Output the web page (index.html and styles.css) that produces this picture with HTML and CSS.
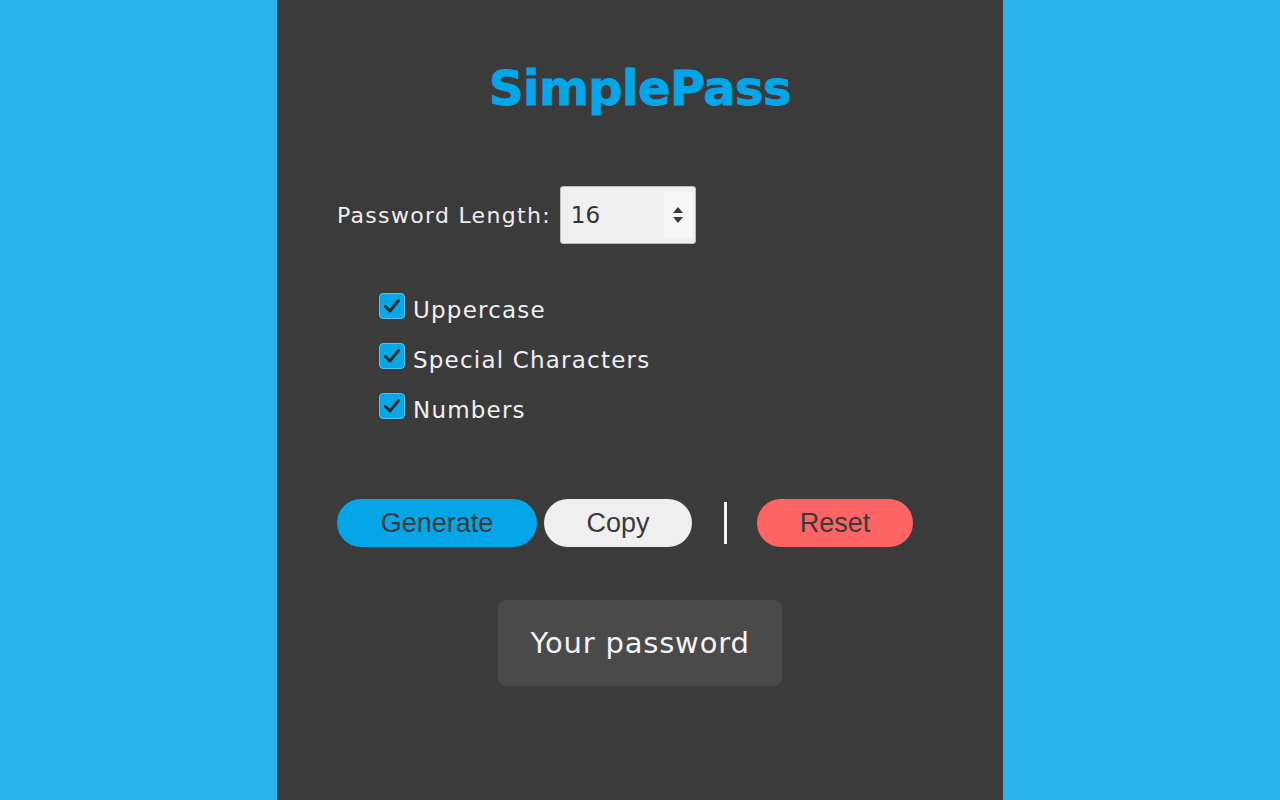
FILE: index.html
```html
<!DOCTYPE html>
<html>
<head>
<meta charset="utf-8">
<link rel="stylesheet" href="styles.css">
</head>
<body>
<main class="panel">
  <h1 class="title">SimplePass</h1>
  <div class="length-row">
    <span class="length-label">Password Length:</span>
    <div class="num-input">
      <span class="num-value">16</span>
      <span class="spinner">
        <svg width="12" height="28" viewBox="0 0 12 28"><path d="M6 6 L11 12 L1 12 Z" fill="#3a3a3a"/><path d="M1 16 L11 16 L6 22 Z" fill="#3a3a3a"/></svg>
      </span>
    </div>
  </div>
  <ul class="options">
    <li class="option"><span class="check"><svg width="22" height="22" viewBox="0 0 22 22"><path d="M4.5 11.5 L9 16 L17.5 5.5" fill="none" stroke="#2e2e2e" stroke-width="3" stroke-linecap="round" stroke-linejoin="round"/></svg></span><span class="opt-label">Uppercase</span></li>
    <li class="option"><span class="check"><svg width="22" height="22" viewBox="0 0 22 22"><path d="M4.5 11.5 L9 16 L17.5 5.5" fill="none" stroke="#2e2e2e" stroke-width="3" stroke-linecap="round" stroke-linejoin="round"/></svg></span><span class="opt-label">Special Characters</span></li>
    <li class="option"><span class="check"><svg width="22" height="22" viewBox="0 0 22 22"><path d="M4.5 11.5 L9 16 L17.5 5.5" fill="none" stroke="#2e2e2e" stroke-width="3" stroke-linecap="round" stroke-linejoin="round"/></svg></span><span class="opt-label">Numbers</span></li>
  </ul>
  <div class="buttons">
    <button class="btn btn-generate">Generate</button>
    <button class="btn btn-copy">Copy</button>
    <span class="divider"></span>
    <button class="btn btn-reset">Reset</button>
  </div>
  <div class="output-wrap">
    <div class="output">Your password</div>
  </div>
</main>
</body>
</html>
```
FILE: styles.css
```css
html, body {
  margin: 0;
  padding: 0;
  height: 100%;
}
body {
  background: #29b3e8;
  display: flex;
  justify-content: center;
}
.panel {
  width: 726px;
  height: 800px;
  box-sizing: border-box;
  background: #3b3b3b;
  padding: 56px 60px 0 60px;
  font-family: "DejaVu Sans", sans-serif;
  color: #f2f2f2;
}
.title {
  margin: 0;
  text-align: center;
  font-family: "DejaVu Sans", sans-serif;
  font-weight: 800;
  font-size: 48px;
  line-height: 64px;
  color: #05a6e8;
  letter-spacing: -0.6px;
  -webkit-text-stroke: 0.9px #05a6e8;
}
.length-row {
  display: flex;
  align-items: center;
  margin-top: 66px;
  gap: 9px;
}
.length-label {
  font-size: 22px;
  letter-spacing: 1.3px;
  color: #eeeeee;
}
.num-input {
  width: 136px;
  height: 58px;
  box-sizing: border-box;
  background: #f0f0f0;
  border: 1px solid #bdbdbd;
  border-radius: 3px;
  display: flex;
  align-items: center;
  justify-content: space-between;
  padding: 0 2px 0 10px;
}
.num-value {
  font-family: "DejaVu Sans", sans-serif;
  font-size: 23px;
  color: #333;
}
.spinner {
  display: flex;
  align-items: center;
  justify-content: center;
  width: 29px;
  height: 46px;
  background: #f6f6f6;
}
.options {
  list-style: none;
  margin: 49px 0 0 42px;
  padding: 0;
  display: flex;
  flex-direction: column;
  gap: 24px;
}
.option {
  display: flex;
  align-items: center;
  gap: 8px;
  height: 26px;
}
.check {
  width: 26px;
  height: 26px;
  box-sizing: border-box;
  background: #0aa7e6;
  border: 1px solid #4cc3f0;
  border-radius: 4px;
  display: flex;
  align-items: center;
  justify-content: center;
}
.opt-label {
  font-size: 23px;
  letter-spacing: 1.2px;
  color: #f0f0f0;
  position: relative;
  top: 4px;
}
.buttons {
  display: flex;
  align-items: center;
  margin-top: 80px;
  gap: 7px;
}
.btn {
  height: 48px;
  border: none;
  border-radius: 24px;
  font-family: "Liberation Sans", sans-serif;
  font-size: 27px;
  color: #3a3a3a;
  padding: 0;
  cursor: pointer;
}
.btn-generate {
  width: 200px;
  background: #05a6e8;
}
.btn-copy {
  width: 148px;
  background: #efefef;
}
.btn-reset {
  width: 156px;
  background: #fe6464;
}
.divider {
  width: 3px;
  height: 42px;
  background: #f4f4f4;
  margin: 0 23px 0 25px;
}
.output-wrap {
  display: flex;
  justify-content: center;
  margin-top: 53px;
}
.output {
  width: 284px;
  height: 86px;
  box-sizing: border-box;
  background: #4a4a4a;
  border-radius: 8px;
  display: flex;
  align-items: center;
  justify-content: center;
  font-size: 29px;
  letter-spacing: 0.8px;
  color: #f4f4f4;
}
```
